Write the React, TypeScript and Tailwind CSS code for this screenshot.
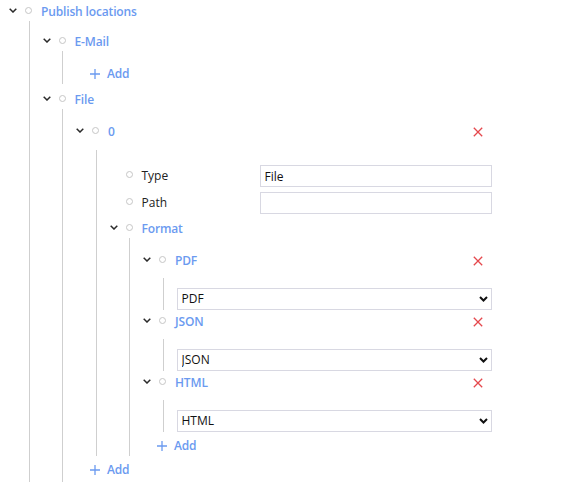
import type { ReactNode } from "react";

const Chevron = () => (
  <svg width="8" height="5" viewBox="0 0 8 5" className="mb-[4px] shrink-0">
    <path d="M0.7 0.7 L4 4 L7.3 0.7" fill="none" stroke="#2a2a2a" strokeWidth="1.5" />
  </svg>
);

const Dot = () => (
  <span className="mb-[4px] ml-[8px] block h-[7px] w-[7px] shrink-0 rounded-full border border-[#c6c6c6]" />
);

const HeaderRow = ({ label }: { label: string }) => (
  <div className="flex h-[18px] items-center">
    <Chevron />
    <Dot />
    <span className="ml-[9px] text-[12px] leading-[18px] font-semibold tracking-[-0.15px] text-[#6b9af0]">{label}</span>
  </div>
);

const ItemRow = ({ label }: { label: string }) => (
  <div className="flex h-[24px] items-center">
    <Chevron />
    <Dot />
    <span className="ml-[9px] text-[12px] leading-[18px] font-semibold tracking-[-0.15px] text-[#6b9af0]">{label}</span>
    <button className="mr-[9px] ml-auto">
      <svg width="10" height="10" viewBox="0 0 10 10" className="block">
        <path d="M0.8 0.8 L9.2 9.2 M9.2 0.8 L0.8 9.2" stroke="#e5484d" strokeWidth="1.3" />
      </svg>
    </button>
  </div>
);

const FieldRow = ({ label, value, className = "" }: { label: string; value: string; className?: string }) => (
  <div className={`flex h-[22px] items-center ${className}`}>
    <span className="w-[8px] shrink-0" />
    <Dot />
    <span className="ml-[9px] w-[118px] shrink-0 text-[12px] text-[#222]">{label}</span>
    <input
      defaultValue={value}
      className="block h-[22px] min-w-0 flex-1 border border-[#d8d8e2] bg-white pl-[4px] text-[12px] text-[#111] outline-none"
    />
  </div>
);

const AddRow = () => (
  <div className="mt-[4px] flex h-[20px] items-center">
    <svg width="10" height="10" viewBox="0 0 10 10" className="ml-[14px] shrink-0">
      <path d="M5 0 V10 M0 5 H10" stroke="#6b9af0" strokeWidth="1.3" />
    </svg>
    <span className="ml-[7px] text-[12px] font-semibold tracking-[-0.15px] text-[#6b9af0]">Add</span>
  </div>
);

const Branch = ({ children, className = "" }: { children: ReactNode; className?: string }) => (
  <div className={`ml-[19.5px] border-l border-[#cfcfcf] pl-[13px] ${className}`}>{children}</div>
);

const FormatSelect = ({ value }: { value: string }) => (
  <div className="relative h-[22px]">
    <select
      defaultValue={value}
      className="block h-[22px] w-full appearance-none border border-[#d8d8e2] bg-white pl-[4px] text-[12px] text-[#111] outline-none"
    >
      <option>PDF</option>
      <option>JSON</option>
      <option>HTML</option>
    </select>
    <svg width="9" height="6" viewBox="0 0 9 6" className="pointer-events-none absolute top-[8px] right-[4px]">
      <path d="M1 1 L4.5 4.5 L8 1" fill="none" stroke="#111" strokeWidth="2" />
    </svg>
  </div>
);

export default function App() {
  const formats = ["PDF", "JSON", "HTML"];

  return (
    <div className="h-screen overflow-hidden bg-white pt-[3px] pr-[69px] pl-[9px] font-['Open_Sans',sans-serif]">
      <HeaderRow label="Publish locations" />
      <Branch className="pt-[12px] pb-[20px]">
        <HeaderRow label="E-Mail" />
        <Branch className="pt-[9px]">
          <AddRow />
        </Branch>
        <div className="mt-[7px]">
          <HeaderRow label="File" />
        </div>
        <Branch className="pt-[11px] pb-[20px]">
          <ItemRow label="0" />
          <Branch className="mt-[6px] pt-[15px]">
            <FieldRow label="Type" value="File" />
            <FieldRow label="Path" value="" className="mt-[5px]" />
            <div className="mt-[6px]">
              <HeaderRow label="Format" />
            </div>
            <Branch className="pt-[11px]">
              {formats.map((f) => (
                <div key={f}>
                  <ItemRow label={f} />
                  <Branch className="mt-[5px] pt-[10px]">
                    <FormatSelect value={f} />
                  </Branch>
                </div>
              ))}
              <AddRow />
            </Branch>
          </Branch>
          <AddRow />
        </Branch>
      </Branch>
    </div>
  );
}
